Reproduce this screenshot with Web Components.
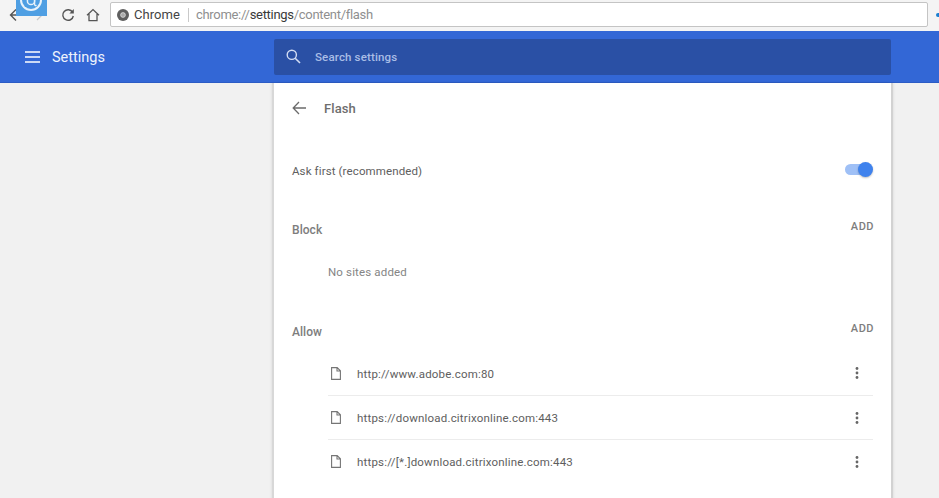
<!DOCTYPE html>
<html>
<head>
<meta charset="utf-8">
<title>Settings - Flash</title>
<style>
    html, body { margin: 0; height: 100%; }
    body {
        width: 939px;
        height: 498px;
        overflow: hidden;
        background: #f1f1f1;
        font-family: Roboto, "Liberation Sans", sans-serif;
        display: flex;
        flex-direction: column;
    }
</style>
</head>
<body>
<browser-bar></browser-bar>
<settings-header></settings-header>
<flash-page>
    <section-row slot="sections" label="Block">
        <div class="empty" style="font-size:11.5px;color:#858585;padding:16px 0 0 36px;height:25px;letter-spacing:.15px;line-height:14px">No sites added</div>
    </section-row>
    <section-row slot="sections" label="Allow">
        <site-row url="http://www.adobe.com:80"></site-row>
        <site-row url="https://download.citrixonline.com:443" divider></site-row>
        <site-row url="https://[*.]download.citrixonline.com:443" divider></site-row>
    </section-row>
</flash-page>

<script>
const browserBarTemplate = document.createElement('template');
browserBarTemplate.innerHTML = /*html*/ `
    <style>
        :host {
            display: flex;
            align-items: center;
            position: relative;
            height: 31px;
            flex: none;
            background: #f4f4f4;
            box-sizing: border-box;
            padding: 0 11px 2px 0;
        }
        .nav { display: flex; align-items: center; width: 110px; flex: none; height: 100%; }
        .nav svg { flex: none; display: block; }
        .back { margin-left: 9px; }
        .forward { margin-left: 11px; }
        .reload { margin-left: 17px; }
        .home { margin-left: 11px; }
        .omnibox {
            flex: 1;
            height: 25px;
            box-sizing: border-box;
            border: 1px solid #c4c4c4;
            border-radius: 2px;
            background: #fff;
            display: flex;
            align-items: center;
            padding-left: 6px;
            font-size: 13px;
            color: #444;
            white-space: nowrap;
        }
        .chip { margin-left: 5px; letter-spacing: .05px; }
        .sep { width: 1px; height: 14px; background: #c9c9c9; margin: 0 7px 0 8px; }
        .url { color: #8f8f8f; letter-spacing: -.3px; }
        .url b { font-weight: 400; color: #3a3a3a; }
        .logo {
            position: absolute;
            left: 16px;
            top: 0;
            width: 31px;
            height: 16px;
            background: #4f9fe3;
            overflow: hidden;
        }
        .logo svg { display: block; }
        .dot {
            position: absolute;
            right: 0;
            top: 13px;
            width: 3px;
            height: 4px;
            border-radius: 2px 0 0 2px;
            background: #1b7fd0;
        }
    </style>
    <div class="nav">
        <svg class="back" width="12" height="14" viewBox="0 0 12 14"><path d="M7 1.5 1.5 7 7 12.5M1.5 7H12" fill="none" stroke="#555" stroke-width="1.4"/></svg>
        <svg class="forward" width="12" height="14" viewBox="0 0 12 14"><path d="M5 2l5 5-5 5" fill="none" stroke="#c8c8c8" stroke-width="1.3"/></svg>
        <svg class="reload" width="14" height="14" viewBox="0 0 14 14"><path d="M11.6 4.2A5.3 5.3 0 1 0 12.3 8" fill="none" stroke="#555" stroke-width="1.4"/><path d="M12.8 1v4.4H8.4z" fill="#555"/></svg>
        <svg class="home" width="14" height="14" viewBox="0 0 14 14"><path d="M1 7.3 7 1.6l6 5.7M3 6v6.6h8V6" fill="none" stroke="#555" stroke-width="1.3"/></svg>
    </div>
    <div class="omnibox">
        <svg width="12" height="12" viewBox="0 0 12 12"><circle cx="6" cy="6" r="6" fill="#5f5f5f"/><circle cx="6" cy="6" r="2.4" fill="#a9a9a9" stroke="#e6e6e6" stroke-width=".7"/></svg>
        <span class="chip">Chrome</span>
        <span class="sep"></span>
        <span class="url">chrome://<b>settings</b>/content/flash</span>
    </div>
    <div class="logo">
        <svg width="31" height="16" viewBox="0 0 31 16">
            <circle cx="15" cy="0" r="11" fill="#e9f3fb"/>
            <circle cx="15" cy="0" r="9" fill="#4f9fe3"/>
            <circle cx="15" cy="1" r="3.6" fill="none" stroke="#e9f3fb" stroke-width="1.5"/>
            <path d="M18.6 0v4q0 2 2 1.5" fill="none" stroke="#e9f3fb" stroke-width="1.3"/>
        </svg>
    </div>
    <div class="dot"></div>
`;

class BrowserBar extends HTMLElement {
    constructor() {
        super();
        this.attachShadow({ mode: 'open' });
        this.shadowRoot.appendChild(browserBarTemplate.content.cloneNode(true));
    }
}
customElements.define('browser-bar', BrowserBar);

const settingsHeaderTemplate = document.createElement('template');
settingsHeaderTemplate.innerHTML = /*html*/ `
    <style>
        :host {
            display: flex;
            align-items: center;
            flex: none;
            height: 52px;
            box-sizing: border-box;
            background: #3367d6;
            border-bottom: 1px solid #2c5cc5;
            color: #fff;
        }
        .title {
            width: 274px;
            flex: none;
            display: flex;
            align-items: center;
            box-sizing: border-box;
            padding-left: 25px;
            font-size: 14.5px;
            color: #eef3fc;
        }
        .title svg { margin-right: 12px; }
        .title span { padding-top: 2px; }
        .search {
            width: 617px;
            height: 36px;
            flex: none;
            display: flex;
            align-items: center;
            box-sizing: border-box;
            padding-left: 12px;
            border-radius: 2px;
            background: #2a50a5;
            font-size: 11.5px;
            font-weight: 500;
            letter-spacing: .15px;
            color: #a9bde6;
        }
        .search svg { margin-right: 14px; }
    </style>
    <div class="title">
        <svg width="15" height="12" viewBox="0 0 15 12"><path d="M0 1h15M0 6h15M0 11h15" stroke="#fff" stroke-width="1.7"/></svg>
        <span>Settings</span>
    </div>
    <div class="search">
        <svg width="15" height="15" viewBox="0 0 15 15"><circle cx="5.8" cy="5.8" r="4.6" fill="none" stroke="#d3ddf3" stroke-width="1.4"/><path d="M9.2 9.2 14 14" stroke="#d3ddf3" stroke-width="1.6"/></svg>
        <span>Search settings</span>
    </div>
`;

class SettingsHeader extends HTMLElement {
    constructor() {
        super();
        this.attachShadow({ mode: 'open' });
        this.shadowRoot.appendChild(settingsHeaderTemplate.content.cloneNode(true));
    }
}
customElements.define('settings-header', SettingsHeader);

const flashPageTemplate = document.createElement('template');
flashPageTemplate.innerHTML = /*html*/ `
    <style>
        :host {
            display: block;
            flex: none;
            width: 617px;
            height: 420px;
            margin-left: 274px;
            box-sizing: border-box;
            background: #fff;
            box-shadow: 2px 0 0 #d2d2d2, -2px 0 0 #d8d8d8, 3px 0 2px rgba(0,0,0,.06), -3px 0 2px rgba(0,0,0,.06);
            color: #5a5a5a;
            font-size: 12px;
        }
        .top {
            display: flex;
            align-items: center;
            height: 50px;
            padding-left: 18px;
            font-size: 13px;
            font-weight: 500;
            color: #6e6e6e;
            letter-spacing: .1px;
        }
        .top svg { margin-right: 18px; }
        .ask {
            display: flex;
            align-items: center;
            justify-content: space-between;
            height: 36px;
            margin-top: 19px;
            padding: 0 18px;
            font-size: 11.5px;
            letter-spacing: .12px;
            color: #606060;
        }
        .ask span { padding-top: 1px; }
        .toggle { position: relative; width: 28px; height: 16px; }
        .track {
            position: absolute;
            left: 0;
            top: 2px;
            width: 26px;
            height: 11px;
            border-radius: 6px;
            background: #9fc0f6;
        }
        .knob {
            position: absolute;
            right: 0;
            top: 0;
            width: 15px;
            height: 15px;
            border-radius: 50%;
            background: #3f82ed;
            box-shadow: 0 1px 2px rgba(0,0,0,.25);
        }
    </style>
    <div class="top">
        <svg width="14" height="14" viewBox="0 0 14 14"><path d="M7 1 1.2 7 7 13M1.2 7H14" fill="none" stroke="#6b6b6b" stroke-width="1.3"/></svg>
        <span>Flash</span>
    </div>
    <div class="ask">
        <span>Ask first (recommended)</span>
        <div class="toggle"><div class="track"></div><div class="knob"></div></div>
    </div>
    <slot name="sections"></slot>
`;

class FlashPage extends HTMLElement {
    constructor() {
        super();
        this.attachShadow({ mode: 'open' });
        this.shadowRoot.appendChild(flashPageTemplate.content.cloneNode(true));
    }
}
customElements.define('flash-page', FlashPage);

const sectionRowTemplate = document.createElement('template');
sectionRowTemplate.innerHTML = /*html*/ `
    <style>
        :host { display: block; padding: 0 18px; margin-top: 6px; }
        .head {
            display: flex;
            justify-content: space-between;
            height: 26px;
            padding-top: 29px;
            font-size: 12px;
            font-weight: 500;
            color: #7d7d7d;
            letter-spacing: .05px;
        }
        .add { font-size: 11px; margin-top: -3px; letter-spacing: .5px; margin-right: -1px; }
    </style>
    <div class="head">
        <span class="label"></span>
        <span class="add">ADD</span>
    </div>
    <slot></slot>
`;

class SectionRow extends HTMLElement {
    constructor() {
        super();
        this.attachShadow({ mode: 'open' });
        this.shadowRoot.appendChild(sectionRowTemplate.content.cloneNode(true));
    }
    connectedCallback() {
        this.shadowRoot.querySelector('.label').textContent = this.getAttribute('label');
    }
}
customElements.define('section-row', SectionRow);

const siteRowTemplate = document.createElement('template');
siteRowTemplate.innerHTML = /*html*/ `
    <style>
        :host {
            display: flex;
            align-items: center;
            height: 44px;
            margin-left: 36px;
            box-sizing: border-box;
            font-size: 11.5px;
            letter-spacing: .19px;
            color: #5e5e5e;
        }
        :host([divider]) { border-top: 1px solid #ececec; }
        svg { flex: none; }
        .file { margin: 0 16px 0 3px; }
        .url { flex: 1; padding-top: 1px; }
        .more { margin-right: 14px; }
    </style>
    <svg class="file" width="10" height="13" viewBox="0 0 10 13"><path d="M.6.6h5.6l3.2 3.2v8.6H.6zM6 .6v3.4h3.4" fill="none" stroke="#757575" stroke-width="1.1"/></svg>
    <span class="url"></span>
    <svg class="more" width="4" height="12" viewBox="0 0 4 12"><circle cx="2" cy="1.5" r="1.4" fill="#666"/><circle cx="2" cy="6" r="1.4" fill="#666"/><circle cx="2" cy="10.5" r="1.4" fill="#666"/></svg>
`;

class SiteRow extends HTMLElement {
    constructor() {
        super();
        this.attachShadow({ mode: 'open' });
        this.shadowRoot.appendChild(siteRowTemplate.content.cloneNode(true));
    }
    connectedCallback() {
        this.shadowRoot.querySelector('.url').textContent = this.getAttribute('url');
    }
}
customElements.define('site-row', SiteRow);
</script>
</body>
</html>
